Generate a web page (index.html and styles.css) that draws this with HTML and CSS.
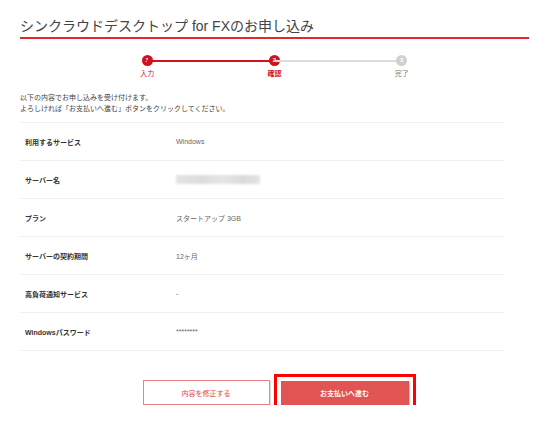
FILE: index.html
```html
<!DOCTYPE html>
<html lang="ja">
<head>
    <meta charset="UTF-8">
    <title>シンクラウドデスクトップ for FXのお申し込み</title>
    <link rel="stylesheet" href="styles.css">
</head>
<body>
<div class="wrap">
    <h1 class="pageTitle">シンクラウドデスクトップ for FXのお申し込み</h1>

    <ol class="steps">
        <li class="step done"><span class="stepNum">1</span><span class="stepName">入力</span></li>
        <li class="step current"><span class="stepNum">2</span><span class="stepName">確認</span></li>
        <li class="step"><span class="stepNum">3</span><span class="stepName">完了</span></li>
    </ol>

    <p class="lead">以下の内容でお申し込みを受け付けます。<br>よろしければ「お支払いへ進む」ボタンをクリックしてください。</p>

    <div class="confirmTable">
        <div class="row">
            <div class="label">利用するサービス</div>
            <div class="value">Windows</div>
        </div>
        <div class="row">
            <div class="label">サーバー名</div>
            <div class="value"><span class="masked"></span></div>
        </div>
        <div class="row">
            <div class="label">プラン</div>
            <div class="value">スタートアップ 3GB</div>
        </div>
        <div class="row">
            <div class="label">サーバーの契約期間</div>
            <div class="value">12ヶ月</div>
        </div>
        <div class="row">
            <div class="label">高負荷通知サービス</div>
            <div class="value">-</div>
        </div>
        <div class="row">
            <div class="label">Windowsパスワード</div>
            <div class="value">********</div>
        </div>
    </div>

    <div class="actions">
        <button class="btn btnBack">内容を修正する</button>
        <button class="btn btnPay">お支払いへ進む</button>
    </div>
</div>
</body>
</html>
```

FILE: styles.css
```css
body {
    margin: 0;
    background: #fff;
    color: #333;
    font-family: "Liberation Sans", "Noto Sans CJK JP", sans-serif;
}

.wrap {
    width: 509px;
    padding: 16px 0 0 20px;
}

.pageTitle {
    margin: 0;
    padding-bottom: 1px;
    font-size: 14px;
    line-height: 20px;
    font-weight: normal;
    color: #444;
    border-bottom: 2px solid #e1282e;
}

/* ステップ */
.steps {
    list-style: none;
    display: grid;
    grid-template-columns: repeat(3, 1fr);
    width: 75%;
    margin: 16px auto 0;
    padding: 0;
}

.step {
    position: relative;
    display: flex;
    flex-direction: column;
    align-items: center;
}

.step + .step::before {
    content: "";
    position: absolute;
    top: 4.5px;
    left: -50%;
    width: 100%;
    height: 2px;
    background: #dcdcdc;
}

.step.done + .step::before {
    background: #d0121b;
}

.stepNum {
    position: relative;
    width: 11px;
    height: 11px;
    border-radius: 50%;
    background: #d0d0d0;
    color: #fff;
    font-size: 6px;
    font-weight: bold;
    line-height: 11px;
    text-align: center;
}

.done .stepNum, .current .stepNum {
    background: #d0121b;
}

.stepName {
    margin-top: 3px;
    font-size: 7px;
    line-height: 10px;
    color: #777;
}

.done .stepName, .current .stepName {
    color: #d0121b;
}

.current .stepName {
    font-weight: bold;
}

.lead {
    margin: 13px 0 0;
    font-size: 7px;
    line-height: 11px;
    color: #444;
}

/* 確認テーブル */
.confirmTable {
    width: 95%;
    margin-top: 8px;
    border-top: 1px solid #f0f0f0;
}

.row {
    display: grid;
    grid-template-columns: 156px 1fr;
    align-items: center;
    height: 37px;
    border-bottom: 1px solid #f0f0f0;
    font-size: 7px;
}

.label {
    padding-left: 5px;
    font-weight: bold;
    color: #333;
}

.value {
    color: #666;
}

.masked {
    display: block;
    width: 84px;
    height: 9px;
    background: linear-gradient(90deg, #e4e4e4, #dcdcdc 30%, #e6e6e6 55%, #dadada 80%, #e4e4e4);
    filter: blur(1.2px);
}

/* ボタン */
.actions {
    display: flex;
    justify-content: center;
    gap: 11px;
    margin: 29px 0 0 2px;
}

.btn {
    height: 25px;
    padding: 0;
    font-family: "Liberation Sans", "Noto Sans CJK JP", sans-serif;
    font-size: 7px;
    cursor: pointer;
}

.btnBack {
    width: 127px;
    background: #fff;
    color: #d94848;
    border: 1px solid #e58585;
    box-shadow: 1px 1px 1px rgba(0, 0, 0, 0.12);
}

.btnPay {
    width: 128px;
    height: 24px;
    margin-top: 1px;
    background: #e15454;
    color: #fff;
    font-weight: bold;
    border: none;
    box-shadow: 1px 1px 1px rgba(0, 0, 0, 0.25);
    outline: 3px solid #ff0000;
    outline-offset: 4px;
}
```
